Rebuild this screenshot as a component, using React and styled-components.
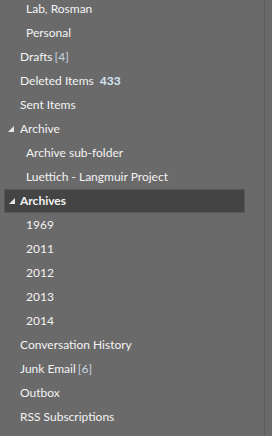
import React from "react";
import styled, { createGlobalStyle } from "styled-components";

const Global = createGlobalStyle`
  html, body { margin: 0; padding: 0; background: #6a6a6a; }
  body { font-family: "Lato", "Noto Sans", sans-serif; }
`;

const Pane = styled.div`
  width: 272px;
  height: 436px;
  overflow: hidden;
  background: #6a6a6a;
  display: flex;
`;

const Tree = styled.ul`
  list-style: none;
  margin: -3px 0 0 0;
  padding: 0;
  width: 265px;
  border-right: 1px solid #5c5c5c;
  box-sizing: border-box;
  flex: none;
`;

const Row = styled.li`
  height: 24px;
  display: flex;
  align-items: center;
  box-sizing: border-box;
  margin: 0 ${(p) => (p.$selected ? "19px" : "0")} 0 ${(p) => (p.$selected ? "4px" : "0")};
  padding-left: ${(p) => (p.$selected ? 15 : 20) + p.$level * 6}px;
  padding-bottom: 1px;
  background: ${(p) => (p.$selected ? "#444444" : "transparent")};
  border: ${(p) => (p.$selected ? "1px solid #575757" : "none")};
  color: #f3f3f3;
  font-size: 12px;
  font-weight: ${(p) => (p.$selected ? 700 : 400)};
  white-space: nowrap;
  position: relative;
`;

const Caret = styled.svg`
  position: absolute;
  left: ${(p) => (p.$selected ? 4 : 8)}px;
  top: ${(p) => (p.$selected ? 8 : 9)}px;
  width: 6px;
  height: 6px;
`;

const Count = styled.span`
  margin-left: ${(p) => (p.$bold ? 6 : 2)}px;
  color: ${(p) => (p.$bold ? "#d6e6f5" : "#c9d7e4")};
  font-weight: ${(p) => (p.$bold ? 700 : 400)};
`;

const items = [
  { label: "Lab, Rosman", level: 1 },
  { label: "Personal", level: 1 },
  { label: "Drafts", level: 0, count: "[4]" },
  { label: "Deleted Items", level: 0, count: "433", bold: true },
  { label: "Sent Items", level: 0 },
  { label: "Archive", level: 0, caret: true },
  { label: "Archive sub-folder", level: 1 },
  { label: "Luettich - Langmuir Project", level: 1 },
  { label: "Archives", level: 0, caret: true, selected: true },
  { label: "1969", level: 1 },
  { label: "2011", level: 1 },
  { label: "2012", level: 1 },
  { label: "2013", level: 1 },
  { label: "2014", level: 1 },
  { label: "Conversation History", level: 0 },
  { label: "Junk Email", level: 0, count: "[6]" },
  { label: "Outbox", level: 0 },
  { label: "RSS Subscriptions", level: 0 },
];

export default function App() {
  return (
    <>
      <Global />
      <Pane>
        <Tree>
          {items.map((it) => (
            <Row key={it.label} $level={it.level} $selected={it.selected}>
              {it.caret && (
                <Caret viewBox="0 0 6 6" $selected={it.selected}>
                  <polygon points="6,0 6,6 0,6" fill="#e8e8e8" />
                </Caret>
              )}
              {it.label}
              {it.count && <Count $bold={it.bold}>{it.count}</Count>}
            </Row>
          ))}
        </Tree>
      </Pane>
    </>
  );
}
